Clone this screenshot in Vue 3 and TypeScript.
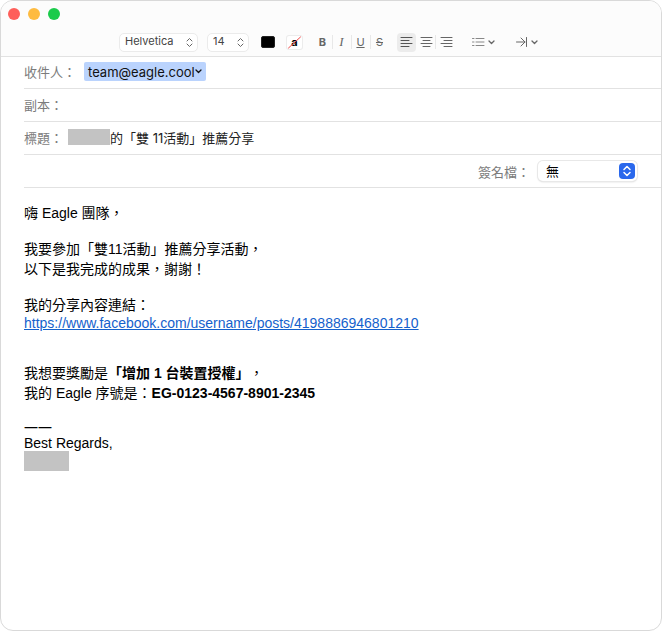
<script setup lang="ts">
import { ref } from 'vue'

type Align = 'left' | 'center' | 'right'

const fontFamily = ref<string>('Helvetica')
const fontSize = ref<string>('14')
const signature = ref<string>('無')
const align = ref<Align>('left')
const cc = ref<string>('')
const subject = ref<string>('的「雙 11活動」推薦分享')

const aligns: { id: Align; label: string; path: string }[] = [
  { id: 'left', label: '靠左對齊', path: 'M1 1.5H12M1 4.5H9M1 7.5H12M1 10.5H9' },
  { id: 'center', label: '置中', path: 'M1 1.5H12M3 4.5H10M1 7.5H12M3 10.5H10' },
  { id: 'right', label: '靠右對齊', path: 'M1 1.5H12M4 4.5H12M1 7.5H12M4 10.5H12' },
]
</script>

<template>
  <main class="window" lang="zh-Hant">
    <header class="titlebar">
      <div class="lights">
        <button class="light close" type="button" aria-label="關閉"></button>
        <button class="light minimize" type="button" aria-label="縮到最小"></button>
        <button class="light zoom" type="button" aria-label="縮放"></button>
      </div>
      <div class="toolbar">
        <div class="picker family">
          <select v-model="fontFamily" aria-label="字體">
            <option>Helvetica</option>
          </select>
          <svg class="steps" viewBox="0 0 7 11" width="7" height="11"><path d="M1 4L3.5 1.5L6 4M1 7L3.5 9.5L6 7" /></svg>
        </div>
        <div class="picker size">
          <select v-model="fontSize" aria-label="字級">
            <option>14</option>
          </select>
          <svg class="steps" viewBox="0 0 7 11" width="7" height="11"><path d="M1 4L3.5 1.5L6 4M1 7L3.5 9.5L6 7" /></svg>
        </div>
        <button class="swatch" type="button" aria-label="文字顏色"></button>
        <button class="backcolor" type="button" aria-label="背景顏色">
          a
          <svg viewBox="0 0 15 13" width="15" height="13"><path d="M1.5 12L13.5 1" /></svg>
        </button>
        <div class="styles">
          <button class="tool" type="button" aria-label="粗體"><b>B</b></button>
          <button class="tool" type="button" aria-label="斜體"><i>I</i></button>
          <button class="tool" type="button" aria-label="底線"><u>U</u></button>
          <button class="tool" type="button" aria-label="刪除線"><s>S</s></button>
        </div>
        <div class="aligns">
          <button
            v-for="a in aligns"
            :key="a.id"
            class="tool"
            :class="{ active: align === a.id, split: a.id === 'center' }"
            type="button"
            :aria-label="a.label"
            @click="align = a.id"
          >
            <svg viewBox="0 0 13 12" width="13" height="12"><path :d="a.path" /></svg>
          </button>
        </div>
        <button class="menu" type="button" aria-label="列表">
          <svg class="list" viewBox="0 0 13 10" width="13" height="10">
            <path d="M4 1.5H12M4 5H12M4 8.5H12M0.5 1.5H2M0.5 5H2M0.5 8.5H2" />
          </svg>
          <svg class="caret" viewBox="0 0 7 5" width="7" height="5"><path d="M1 1L3.5 3.5L6 1" /></svg>
        </button>
        <button class="menu indent" type="button" aria-label="縮排">
          <svg viewBox="0 0 12 10" width="12" height="10"><path d="M0.5 5H9M5 1L9 5L5 9M10.5 0.5V9.5" /></svg>
          <svg class="caret" viewBox="0 0 7 5" width="7" height="5"><path d="M1 1L3.5 3.5L6 1" /></svg>
        </button>
      </div>
    </header>

    <section class="fields">
      <div class="row">
        <label for="recipient">收件人：</label>
        <button id="recipient" class="chip" type="button">
          team@eagle.cool
          <svg viewBox="0 0 7 5" width="7" height="5"><path d="M1 1L3.5 3.5L6 1" /></svg>
        </button>
      </div>
      <div class="row">
        <label for="cc">副本：</label>
        <input id="cc" v-model="cc" type="text" />
      </div>
      <div class="row">
        <label for="subject">標題：</label>
        <span class="redacted"></span>
        <input id="subject" v-model="subject" type="text" />
      </div>
      <div class="row signature">
        <label for="signature">簽名檔：</label>
        <div class="popup">
          <select id="signature" v-model="signature">
            <option>無</option>
          </select>
          <span class="badge">
            <svg viewBox="0 0 10 12" width="10" height="12"><path d="M2 4.5L5 1.5L8 4.5M2 7.5L5 10.5L8 7.5" /></svg>
          </span>
        </div>
      </div>
    </section>

    <article class="message">
      <p>嗨 Eagle 團隊，</p>
      <p>我要參加「雙11活動」推薦分享活動，<br />以下是我完成的成果，謝謝！</p>
      <div class="share">
        <p>我的分享內容連結：</p>
        <a href="https://www.facebook.com/username/posts/4198886946801210">https://www.facebook.com/username/posts/4198886946801210</a>
      </div>
      <p>我想要獎勵是<b>「增加 1 台裝置授權」</b>，<br />我的 Eagle 序號是：<b>EG-0123-4567-8901-2345</b></p>
      <footer class="sign">
        <p class="dashes">——</p>
        <p>Best Regards,</p>
        <span class="redacted"></span>
      </footer>
    </article>
  </main>
</template>

<style>
body {
  margin: 0;
  background: #fff;
}
</style>

<style scoped>
* {
  box-sizing: border-box;
}

.window {
  min-height: 100vh;
  border: 1px solid #d9d9d9;
  border-radius: 13px;
  overflow: hidden;
  background: #fff;
  color: #000;
  font-family: Inter, 'Noto Sans CJK TC', sans-serif;
  font-size: 13px;
  text-spacing-trim: space-all;
}

button,
select,
input {
  margin: 0;
  padding: 0;
  border: 0;
  background: none;
  color: inherit;
  font: inherit;
}

svg {
  display: block;
  fill: none;
  stroke: currentColor;
  stroke-linecap: round;
  stroke-linejoin: round;
}

.titlebar {
  padding: 7px 0 4px;
  border-bottom: 1px solid #e2e2e2;
  background: #fcfcfc;
}

.lights {
  display: flex;
  gap: 8px;
  padding-left: 7px;
}

.light {
  width: 12px;
  height: 12px;
  border-radius: 50%;
}

.close {
  background: #fe5f5a;
}

.minimize {
  background: #febb40;
}

.zoom {
  background: #1bcb4b;
}

.toolbar {
  display: flex;
  align-items: center;
  justify-content: center;
  margin-top: 12px;
  padding-right: 3px;
  height: 20px;
  color: #666;
  font-size: 11px;
}

.picker {
  position: relative;
}

.picker select {
  display: block;
  width: 100%;
  height: 19px;
  padding: 0 0 2px 5px;
  border: 1px solid #ebebeb;
  border-radius: 5px;
  background: #fff;
  color: #444;
  appearance: none;
}

.family {
  width: 79px;
}

.size {
  width: 42px;
  margin-left: 9px;
}

.steps {
  position: absolute;
  top: 4px;
  right: 5px;
  pointer-events: none;
}

.swatch {
  width: 14px;
  height: 12px;
  margin-left: 12px;
  border: 1px solid #222;
  border-radius: 2px;
  background: #000;
}

.backcolor {
  position: relative;
  width: 15px;
  height: 13px;
  margin-left: 12px;
  border-radius: 2px;
  box-shadow: 0 0 0 1px #ececec;
  background: #fff;
  color: #000;
  font-weight: 700;
  line-height: 12px;
}

.backcolor svg {
  position: absolute;
  top: 0;
  left: 0;
  stroke: #f04848;
}

.styles {
  display: flex;
  margin-left: 11px;
}

.tool {
  display: flex;
  align-items: center;
  justify-content: center;
  width: 19px;
  height: 19px;
}

.styles .tool {
  padding-bottom: 1px;
}

.styles .tool + .tool {
  background: linear-gradient(#e8e8e8, #e8e8e8) left center / 1px 14px no-repeat;
}

.tool i {
  font-family: 'Liberation Serif', serif;
  font-size: 13px;
}

.aligns {
  display: flex;
  gap: 1px;
  margin-left: 8px;
}

.aligns .tool {
  padding-bottom: 1px;
}

.active {
  border-radius: 4px;
  background: #ececec;
  color: #555;
}

.split {
  background: linear-gradient(#e8e8e8, #e8e8e8) right center / 1px 14px no-repeat;
}

.menu {
  display: flex;
  align-items: center;
  gap: 3px;
  width: 24px;
  margin-left: 16px;
}

.indent {
  margin-left: 20px;
}

.list {
  color: #888;
}

.caret {
  flex: none;
  stroke-width: 1.3;
}

.fields {
  padding-left: 23px;
}

.row {
  display: flex;
  align-items: center;
  height: 33px;
  padding-bottom: 2px;
  border-bottom: 1px solid #e2e2e2;
}

.row:first-child {
  height: 32px;
}

.row label {
  color: #7c7c7c;
}

.row input {
  flex: 1;
  min-width: 0;
  height: 20px;
  color: #222;
  outline: none;
}

.chip {
  display: flex;
  align-items: center;
  height: 19px;
  margin-left: 8px;
  padding: 0 4px;
  border-radius: 2px;
  background: #bad3fd;
  color: #111;
}

.chip svg {
  stroke-width: 1.3;
}

.redacted {
  display: block;
  background: #c3c3c3;
}

.row .redacted {
  width: 42px;
  height: 16px;
  margin-left: 5px;
}

.row.signature {
  justify-content: flex-end;
  padding: 0 24px 0 0;
}

.popup {
  position: relative;
  width: 99px;
  margin-left: 8px;
}

.popup select {
  display: block;
  width: 100%;
  height: 20px;
  padding-left: 8px;
  border-radius: 5px;
  background: #fff;
  box-shadow: 0 0 0 1px #e8e8e8, 0 1px 2px #d0d0d0;
  appearance: none;
}

.badge {
  position: absolute;
  top: 2px;
  right: 2px;
  display: flex;
  align-items: center;
  justify-content: center;
  width: 16px;
  height: 16px;
  border-radius: 4px;
  background: #2a68ec;
  color: #fff;
  pointer-events: none;
}

.badge svg {
  stroke-width: 1.5;
}

.message {
  display: flex;
  flex-direction: column;
  gap: 16px;
  padding: 15px 23px;
  font-family: 'Liberation Sans', 'Noto Sans CJK TC', sans-serif;
  font-size: 14px;
  line-height: 20px;
}

.message p {
  margin: 0;
}

.share {
  padding-bottom: 16px;
}

.share a {
  display: block;
  color: #1461cc;
  line-height: 16px;
}

.sign {
  line-height: 16px;
}

.dashes {
  font-family: 'Noto Sans', sans-serif;
}

.sign .redacted {
  width: 45px;
  height: 20px;
}
</style>
